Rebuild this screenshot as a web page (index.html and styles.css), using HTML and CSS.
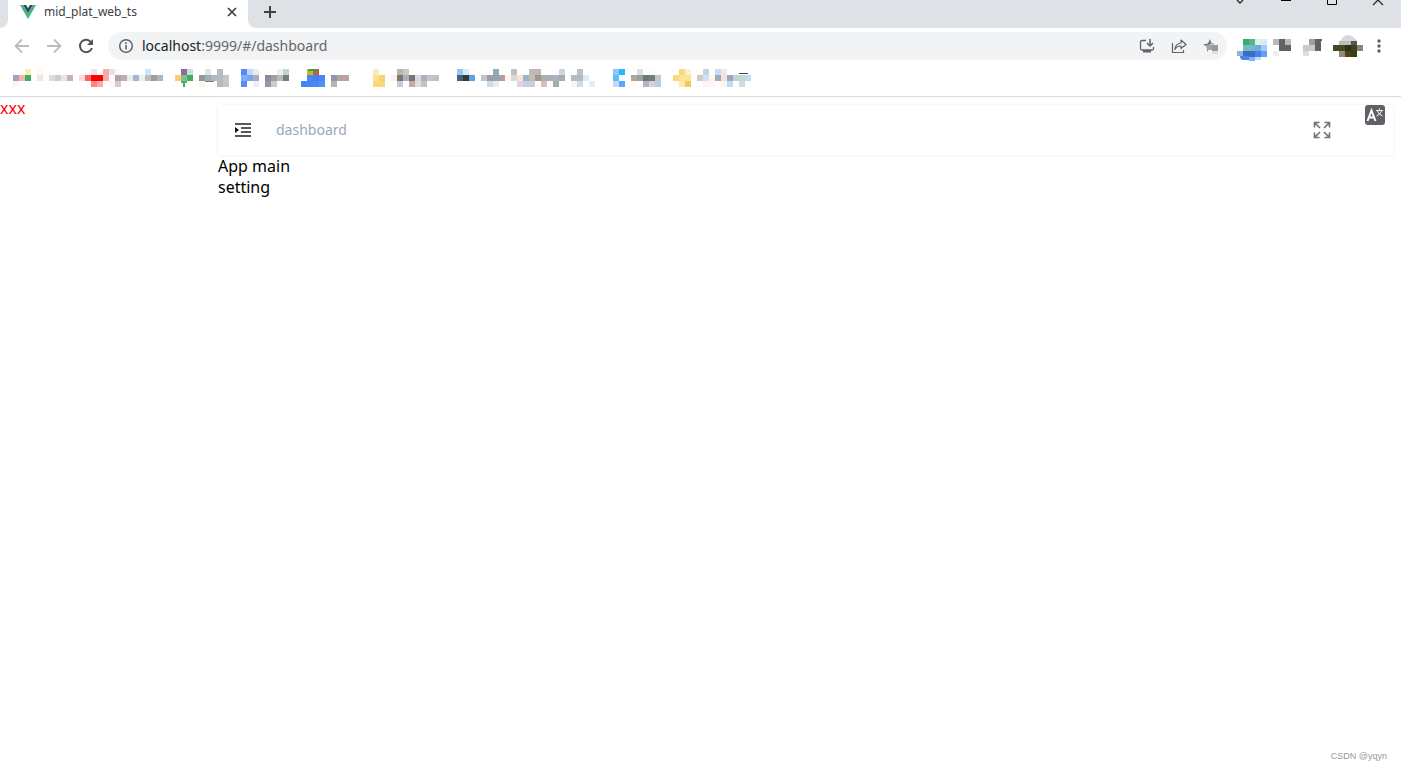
FILE: index.html
```html
<!DOCTYPE html>
<html lang="en">
<head>
<meta charset="utf-8">
<title>mid_plat_web_ts</title>
<link rel="stylesheet" href="styles.css">
</head>
<body>
<div class="browser">
  <header class="chrome">
    <div class="tabstrip">
      <div class="tab-edge"></div>
      <div class="tab">
        <svg class="favicon" viewBox="0 0 16 14"><path fill="#41b883" d="M0 0h3.2L8 8.3 12.8 0H16L8 14z"/><path fill="#35495e" d="M3.2 0h3L8 3.2 9.800 0h3L8 8.300z"/></svg>
        <span class="tab-title">mid_plat_web_ts</span>
        <button class="icon-button tab-close" aria-label="Close tab"><svg width="10" height="10" viewBox="0 0 10 10"><path d="M1 1l8 8M9 1L1 9" stroke="#3c4043" stroke-width="1.7"/></svg></button>
      </div>
      <div class="strip-rest">
        <button class="icon-button new-tab" aria-label="New tab"><svg width="12" height="12" viewBox="0 0 12 12"><path d="M6 0v12M0 6h12" stroke="#3c4043" stroke-width="2"/></svg></button>
        <div class="window-buttons">
          <button class="icon-button" aria-label="Search tabs"><svg width="12" height="6" viewBox="0 0 12 6"><path d="M3 0l3 3 3-3" fill="none" stroke="#222" stroke-width="1.3"/></svg></button>
          <button class="icon-button" aria-label="Minimize"><svg width="12" height="6" viewBox="0 0 12 6"><path d="M1 .5h10" stroke="#000"/></svg></button>
          <button class="icon-button" aria-label="Maximize"><svg width="12" height="6" viewBox="0 0 12 6"><path d="M1.500 0v4.500h9V0" fill="none" stroke="#000"/></svg></button>
          <button class="icon-button" aria-label="Close"><svg width="12" height="6" viewBox="0 0 12 6"><path d="M1 5l5-5 5 5" fill="none" stroke="#222" stroke-width="1.2"/></svg></button>
        </div>
      </div>
    </div>

    <div class="toolbar">
      <div class="nav-buttons">
        <button class="icon-button" aria-label="Back"><svg width="16" height="16" viewBox="0 0 16 16"><path d="M15 8H2M8 1.500L1.500 8 8 14.500" fill="none" stroke="#babcbe" stroke-width="1.800"/></svg></button>
        <button class="icon-button" aria-label="Forward"><svg width="16" height="16" viewBox="0 0 16 16"><path d="M1 8h13M8 1.500L14.500 8 8 14.500" fill="none" stroke="#babcbe" stroke-width="1.800"/></svg></button>
        <button class="icon-button" aria-label="Reload"><svg width="16" height="16" viewBox="0 0 16 16"><path d="M13.300 4.500A6.200 6.200 0 1 0 14 10" fill="none" stroke="#505459" stroke-width="2"/><path d="M15 1v6H9z" fill="#505459"/></svg></button>
      </div>
      <div class="address">
        <svg class="info" width="16" height="16" viewBox="0 0 16 16"><circle cx="8" cy="8" r="6.300" fill="none" stroke="#5f6368" stroke-width="1.500"/><path d="M8 7v4.500M8 4.300v1.600" stroke="#5f6368" stroke-width="1.600"/></svg>
        <span class="url"><span class="host">localhost</span>:9999/#/dashboard</span>
        <div class="address-actions">
          <button class="icon-button" aria-label="Install"><svg width="16" height="16" viewBox="0 0 16 16"><path d="M7 2.500H3Q1.500 2.500 1.500 4v6.500Q1.500 12 3 12h10q1.500 0 1.500-1.500V9" fill="none" stroke="#5f6368" stroke-width="1.300"/><path d="M11 1v7M8 5l3 3 3-3" fill="none" stroke="#5f6368" stroke-width="1.500"/><path d="M4 12h8v2.500H4z" fill="#5f6368"/></svg></button>
          <button class="icon-button" aria-label="Share"><svg width="16" height="16" viewBox="0 0 16 16"><path d="M1.500 5v9.500h11V12" fill="none" stroke="#5f6368" stroke-width="1.200"/><path d="M10 5V2l5 4.500-5 4V8Q5.500 8 4 11.500 4.500 5.500 10 5z" fill="none" stroke="#5f6368" stroke-width="1.200" stroke-linejoin="round"/></svg></button>
          <button class="icon-button" aria-label="Bookmark"><svg width="16" height="16" viewBox="0 0 16 16"><path d="M0 6.500l5-1L7 1l1.500 4.500H11L5 7v6.500l-1-.5 1-4z" fill="#6f7276"/><path fill="#a4a5a7" d="M3 7h7v5H4z"/><path fill="#b8b9bb" d="M9 5h2v2H9z"/><path fill="#98999b" d="M9 7h6v6H9z"/><path fill="#dddee0" d="M9 13h6v3H9z"/></svg></button>
        </div>
      </div>
      <div class="extensions">
        <button class="icon-button" aria-label="Extension"><svg width="30" height="32" viewBox="0 -8 30 32"><path fill="#d9e9f8" d="M24 1h6v6h-6z"/><path fill="#30b06c" d="M6 1h6v6H6z"/><path fill="#54b48c" d="M12 1h6v6h-6z"/><path fill="#dcf3e5" d="M18 1h6v6h-6z"/><path fill="#78b8c4" d="M6 7h12v6H6z"/><path fill="#70acd0" d="M18 7h6v6h-6z"/><path fill="#a8c8fc" d="M24 7h6v6h-6z"/><path fill="#90b0e0" d="M0 13h6v5H0z"/><path fill="#3c6cbc" d="M6 13h12v6H6z"/><path fill="#4284ed" d="M18 13h6v6h-6z"/><path fill="#659ff2" d="M24 13h6v6h-6z"/><path fill="#4285f4" d="M3 18h9v4H6q-3 0-3-4z"/><path fill="#88b0f4" d="M12 19h6v4h-6z"/><path fill="#c6d9fb" d="M18 19h6v3h-6z"/></svg></button>
        <button class="icon-button" aria-label="Extensions"><svg width="24" height="32" viewBox="0 -8 24 32"><path fill="#b8babc" d="M0 1h6v6H0zM12 1h6v6h-6z"/><path fill="#5f6368" d="M6 1h6v6H6zM6 7h12v6H6z"/><path fill="#eee" d="M0 13h6v5H0z"/></svg></button>
        <button class="icon-button" aria-label="Side panel"><svg width="24" height="32" viewBox="0 -8 24 32"><path fill="#9b9ea2" d="M6 1h6v6H6z"/><path fill="#5f6368" d="M12 1h7v2h-1v10h-6z"/><path fill="#c8cacc" d="M0 7h12v6H0z"/><path fill="#dcdddf" d="M0 13h6v5H0z"/></svg></button>
        <button class="icon-button" aria-label="Profile"><svg width="30" height="32" viewBox="0 -8 30 32"><path fill="#d8d8da" d="M7 3Q15-9 24 3v4H7z"/><path fill="#bbbdbf" d="M6 3h12v4H6z"/><path fill="#505854" d="M18 3h6v4h-6z"/><path fill="#404c24" d="M0 7h12v6H0z"/><path fill="#2b3514" d="M12 7h6v6h-6z"/><path fill="#3b441b" d="M18 7h6v6h-6z"/><path fill="#858976" d="M24 7h6v6h-6z"/><path fill="#988878" d="M6 13h6v6H6z"/><path fill="#50401c" d="M12 13h6v6h-6z"/><path fill="#344010" d="M18 13h6v6h-6z"/></svg></button>
        <button class="icon-button menu" aria-label="Menu"><svg width="4" height="14" viewBox="0 0 4 14"><g fill="#5f6368"><circle cx="2" cy="2" r="1.700"/><circle cx="2" cy="7" r="1.700"/><circle cx="2" cy="12" r="1.700"/></g></svg></button>
      </div>
    </div>

    <nav class="bookmarks" id="bookmarks" aria-label="Bookmarks"></nav>
  </header>

  <div class="app">
    <aside class="sidebar">xxx</aside>
    <main class="main">
      <div class="navbar">
        <button class="icon-button" aria-label="Toggle sidebar"><svg width="16" height="14" viewBox="0 0 16 14"><path d="M0 1h16M6 5h10M6 9h10M0 13h16" stroke="#222" stroke-width="1.500"/><path d="M0 4l4 3-4 3z" fill="#111"/></svg></button>
        <span class="crumb">dashboard</span>
        <button class="icon-button fullscreen" aria-label="Full screen"><svg width="18" height="18" viewBox="0 0 18 18"><path d="M6.500 1.500h-5v5M1.500 1.500L7 7M11.500 1.500h5v5M16.500 1.500L11 7M6.500 16.500h-5v-5M1.500 16.500L7 11M11.500 16.500h5v-5M16.500 16.500L11 11" fill="none" stroke="#6d7178" stroke-width="1.600"/></svg></button>
        <button class="icon-button translate" aria-label="Language"><svg width="20" height="20" viewBox="0 0 20 20"><rect width="20" height="20" rx="3" fill="#5f6166"/><path d="M2.500 16L6.500 5.500 10.500 16M4 12.500h5" fill="none" stroke="#fff" stroke-width="2"/><path d="M11 5.500h7M14.500 3.500v2M12.500 6q1 3.500 5 5M16.500 6q-1 3.500-5 5" fill="none" stroke="#f0f0f0"/></svg></button>
      </div>
      <div>App main</div>
      <div>setting</div>
    </main>
  </div>
  <div class="watermark">CSDN @yqyn</div>
</div>
<script src="script.js"></script>
</body>
</html>
```
FILE: styles.css
```css
* { box-sizing: border-box; }
body {
  margin: 0;
  background: #fff;
  color: #000;
  font: 16px/21px "Noto Sans", "Open Sans", sans-serif;
}
.browser { position: relative; min-height: 100vh; }
.icon-button {
  display: flex;
  align-items: center;
  justify-content: center;
  padding: 0;
  border: 0;
  background: none;
}
.chrome { border-bottom: 1px solid #d9d9d9; }
.tabstrip { display: flex; height: 28px; background: #fff; }
.tab-edge { width: 8px; background: #dee1e6; border-bottom-right-radius: 8px; }
.tab {
  display: flex;
  align-items: center;
  width: 240px;
  padding: 0 11px 5px 12px;
}
.favicon { width: 16px; height: 14px; }
.tab-title { flex: 1; margin-left: 8px; font-size: 12px; color: #3c4043; }
.strip-rest {
  display: flex;
  flex: 1;
  justify-content: space-between;
  align-items: flex-start;
  padding: 0 17px 0 16px;
  background: #dee1e6;
  border-bottom-left-radius: 8px;
}
.new-tab { height: 23px; }
.window-buttons { display: flex; gap: 34px; }
.toolbar { display: flex; align-items: center; height: 36px; padding: 0 12px 0 14px; }
.nav-buttons { display: flex; gap: 16px; margin-right: 14px; }
.address {
  display: flex;
  flex: 1;
  align-items: center;
  height: 28px;
  padding: 0 8px 0 10px;
  border-radius: 14px;
  background: #f1f3f4;
}
.url {
  flex: 1;
  margin-left: 8px;
  padding-bottom: 2px;
  font-size: 14px;
  color: #63676b;
}
.host { color: #202124; }
.address-actions { display: flex; gap: 16px; }
.extensions { display: flex; align-items: center; gap: 6px; margin-left: 10px; }
.menu { width: 20px; }
.bookmarks { display: flex; height: 32px; padding: 5px 13px; }
.bookmarks svg { display: block; }
.app { display: flex; }
.sidebar { width: 210px; padding-top: 1px; color: #f00; }
.main { flex: 1; padding: 8px; }
.navbar {
  position: relative;
  display: flex;
  align-items: center;
  height: 50px;
  margin-bottom: 1px;
  padding: 0 62px 0 17px;
  border-radius: 2px;
  box-shadow: 0 0 4px rgba(0, 0, 0, 0.08);
}
.crumb { margin-left: 25px; padding-bottom: 2px; font-size: 14px; color: #97a8be; }
.fullscreen { margin-left: auto; }
.translate { position: absolute; top: 0; right: 8px; }
.watermark {
  position: absolute;
  right: 14px;
  bottom: 4px;
  color: #999;
  font: 9px/20px "Liberation Sans", sans-serif;
}
```
FILE: script.js
```
// Each bookmark: first column, then three rows of "column:colour" cells.
const CELL = 6;
const bookmarks = [
  [0, "2:fcecb8 4:fffaf2", "0:b09ac0 1:f8b4b0 2:40ae5c 4:eee6e0 5:fffefa 6:dadcdc 7:c8ccd6 8:ece4ea 9:c0b4bc", "0:f6f7ff"],
  [11, "13:fddede 15:fbaaaa 16:e4e4e4 17:f8fcff 22:cfe5f9", "11:fddada 12:f86464 13:ff0000 14:ff0000 15:fbaaaa 17:b4a4a8 18:b8b0ac 19:ececea 20:a8b4cc 21:e4f4ec 22:c0bcb8 23:a09c98 24:acb8bc", "13:fc8484 14:fbaaaa 16:fff6f6 17:d4ccc8"],
  [27, "28:8c6ca0 29:c4e0d8 32:e2e4e0 34:b8bcbc", "27:fccc78 28:80c480 29:3eae5a 31:90989c 32:a0b0b4 33:acb8c4 34:b8bcbc 35:ccc4cc", "28:48b068 31:fff4ea 34:b8b8c0 35:c8c4cc"],
  [38, "38:528cf4 39:c0d8fc 40:ececf0 42:fffef4 44:ecf0ec 45:c8d0cc", "38:80b0fc 39:78a4f4 40:a4b0b8 42:888ca0 43:a0a0a0 44:b8bcb8 45:747c84", "38:528cf4 40:eeeef6 42:9898a4 43:d4c8c8"],
  [48, "49:c4b820 50:c06040", "49:4888f4 50:4080f0 51:4888f4 53:9094a4 54:b0a4a8 55:c0a49c", "48:4285f4 49:4285f4 50:4888f4 51:5090f8 53:b8b4b4"],
  [60, "60:f8ecc4 64:b8b4b0 65:d0c8c0", "60:fce28c 61:f4d474 63:f8f0ea 64:7c7870 65:a4b4c4 66:7c7470 67:d4dae4 68:b0b0b8 69:c0c4d4 70:c0c0c0", "60:f8d878 61:f8d878 64:ccc8dc 66:c0ac9c 67:e4dcd4 68:c4c0cc"],
  [74, "74:94c8f4 75:d4ecfc 80:94a8b8 83:c0c0c0 86:b8bcc0 87:c0b8b0 91:ccd4e4 94:c0c0c0", "74:486078 75:383838 76:5ca4e0 78:c8c4cc 79:a09cac 80:90a4b4 81:b0a0a0 82:fff4ea 83:dcd8dc 84:f0e4dc 85:9cb4c8 86:c4bcb0 87:a09890 88:a8b0ac 89:a8b0b0 90:b0b0c0 91:a4acac 93:b4bcc0 94:b4bcbc 95:d8ecfc", "79:d0dce8 80:e8ecf0 84:e4d4dc 85:ccd0dc 86:ccccdc 88:dcbcbc 90:a8acac 93:fff4ea 94:d0dce4 96:e0f0fc"],
  [100, "100:88c8fc 101:28b8fc 104:e0dce4 106:f8fffa", "100:5cbcfc 101:f0fcff 103:a8a8a0 104:a0a098 105:6c7878 106:707c80 107:c4c4d4", "100:c4d8fc 101:58a8fc 103:fffcf4 105:b4b4c8 106:dcd0cc 107:b8ccdc"],
  [110, "111:f8d878 112:fcf0d4 115:c4d4dc 117:c4dff4 118:f0e8e4", "110:f8d878 111:fce490 112:fce490 114:d4c8c4 115:cce4fc 116:fff4ea 117:a0a8bc 118:f0e4dc 119:a0a4bc 120:c4d0d8 121:c8d4cc 122:c0dcf4", "111:fce8b0 112:f0cc60 115:fff4ee 116:fff4ee 118:fff4ea 119:c0dcf4 121:d0dce0"]
];

// Details drawn over the cells, keyed by first column.
const accents = {
  27: '<path fill="#fff" d="M6 14h2v4H6zM10 14h2v4h-2z"/><path d="M30 12.500h9" stroke="#887870"/>',
  48: '<path d="M8 0h7l2 2H6z" fill="#30a050"/>',
  110: '<path d="M66 4.500h8v-1" fill="none" stroke="#354a48"/>'
};

let end = 0;
document.getElementById("bookmarks").innerHTML = bookmarks.map(([start, ...rows], n) => {
  const gap = (start - end) * CELL;
  let last = start;
  let cells = "";
  rows.forEach((row, y) => row.split(" ").forEach(item => {
    const [col, colour] = item.split(":");
    last = Math.max(last, +col);
    cells += `<rect x="${(col - start) * CELL}" y="${y * CELL}" width="${CELL}" height="${CELL}" fill="#${colour}"/>`;
  }));
  end = last + 1;
  return `<a href="#" aria-label="Bookmark ${n + 1}" style="margin-left:${gap}px"><svg width="${(end - start) * CELL}" height="18" shape-rendering="crispEdges">${cells}${accents[start] || ""}</svg></a>`;
}).join("");
```
